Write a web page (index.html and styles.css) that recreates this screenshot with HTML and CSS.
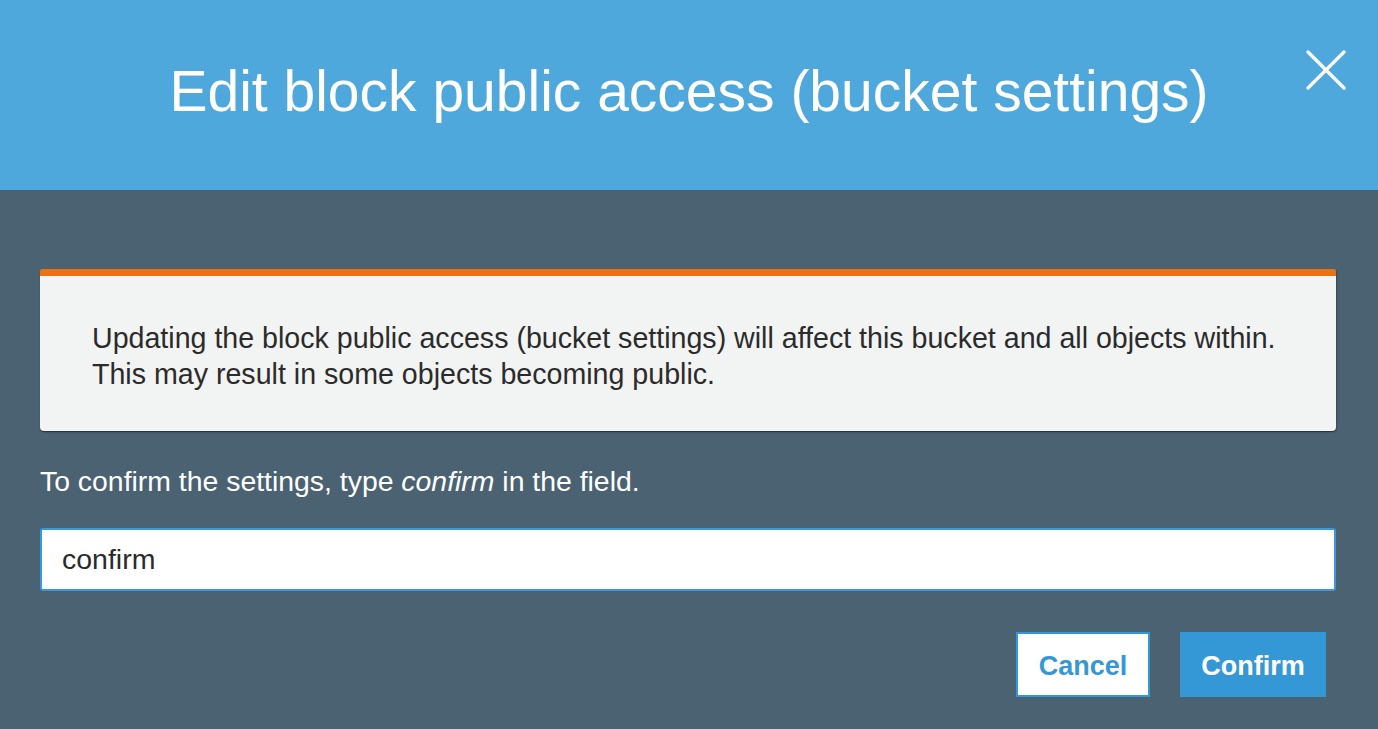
FILE: index.html
```html
<!DOCTYPE html>
<html lang="en">
<head>
<meta charset="utf-8">
<title>Edit block public access (bucket settings)</title>
<link rel="stylesheet" href="styles.css">
</head>
<body>
<div class="modal">
  <header class="modal-header">
    <h1 class="modal-title">Edit block public access (bucket settings)</h1>
    <button class="close-btn" aria-label="Close">
      <svg width="40" height="40" viewBox="0 0 40 40"><path d="M2 2 L38 38 M38 2 L2 38" stroke="#fff" stroke-width="3.2" stroke-linecap="round" fill="none"/></svg>
    </button>
  </header>
  <main class="modal-body">
    <div class="alert">
      <p class="alert-text">Updating the block public access (bucket settings) will affect this bucket and all objects within.<br>This may result in some objects becoming public.</p>
    </div>
    <p class="confirm-label">To confirm the settings, type <em>confirm</em> in the field.</p>
    <input class="confirm-input" type="text" value="confirm">
    <div class="actions">
      <button class="btn btn-cancel">Cancel</button>
      <button class="btn btn-primary">Confirm</button>
    </div>
  </main>
</div>
</body>
</html>
```
FILE: styles.css
```css
html, body {
  margin: 0;
  padding: 0;
}
body {
  font-family: "Liberation Sans", Arial, Helvetica, sans-serif;
  background: #4b6272;
  width: 1378px;
  height: 729px;
  overflow: hidden;
}
.modal {
  display: flex;
  flex-direction: column;
  height: 729px;
}
.modal-header {
  position: relative;
  height: 190px;
  background: #4fa8dc;
  display: flex;
  align-items: center;
  justify-content: center;
  padding-bottom: 9px;
  box-sizing: border-box;
}
.modal-title {
  margin: 0;
  color: #fff;
  font-weight: 400;
  font-size: 57px;
  line-height: 64px;
  letter-spacing: 0;
}
.close-btn {
  position: absolute;
  top: 50px;
  right: 32px;
  width: 40px;
  height: 40px;
  padding: 0;
  border: 0;
  background: transparent;
}
.close-btn svg {
  display: block;
}
.modal-body {
  padding: 79px 42px 0 40px;
  display: flex;
  flex-direction: column;
}
.alert {
  background: #f2f4f3;
  border-top: 7px solid #ec7211;
  border-radius: 2px 2px 4px 4px;
  box-shadow: 0 1px 1px rgba(0,0,0,0.35), 1px 1px 2px rgba(0,0,0,0.25);
  padding: 44px 40px 38px 52px;
  height: 162px;
  box-sizing: border-box;
}
.alert-text {
  margin: 0;
  color: #2b2b2b;
  font-size: 28.6px;
  line-height: 36px;
}
.confirm-label {
  margin: 32px 0 0;
  color: #fff;
  font-size: 28.4px;
  line-height: 36px;
}
.confirm-label em {
  font-style: italic;
}
.confirm-input {
  margin-top: 29px;
  height: 63px;
  box-sizing: border-box;
  border: 2px solid #3a9ad9;
  border-radius: 3px;
  background: #fff;
  padding: 0 20px;
  font-family: "Liberation Sans", Arial, sans-serif;
  font-size: 28.5px;
  color: #2b2b2b;
  outline: none;
}
.actions {
  margin-top: 41px;
  display: flex;
  justify-content: flex-end;
  gap: 30px;
  padding-right: 10px;
}
.btn {
  height: 65px;
  padding: 4px 0 0;
  font-family: "Liberation Sans", Arial, sans-serif;
  font-size: 27px;
  font-weight: 700;
  box-sizing: border-box;
  border-radius: 0;
  cursor: pointer;
}
.btn-cancel {
  width: 134px;
  background: #fff;
  color: #3498d6;
  border: 2px solid #3498d6;
}
.btn-primary {
  width: 146px;
  background: #3498d6;
  color: #fff;
  border: 2px solid #3498d6;
}
```
